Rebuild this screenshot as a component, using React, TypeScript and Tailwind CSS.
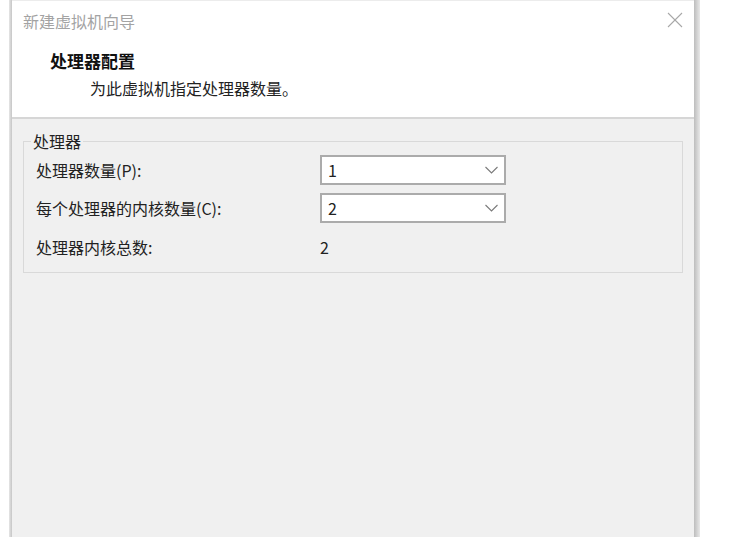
import React from "react";

const FONT = { fontFamily: '"Noto Sans CJK SC", "Microsoft YaHei", sans-serif' };

function Chevron() {
  return (
    <svg width="13" height="8" viewBox="0 0 13 8" fill="none">
      <polyline points="0.5,1 6.5,7 12.5,1" stroke="#7a7a7a" strokeWidth="1.1" />
    </svg>
  );
}

function Combo({ value }: { value: string }) {
  return (
    <div className="flex h-[30px] w-[186px] items-center justify-between border-2 border-[#ababab] bg-white pl-[6px] pr-[6px]">
      <span className="text-[16px] leading-[20px] text-[#222]">{value}</span>
      <Chevron />
    </div>
  );
}

export default function App() {
  return (
    <div className="h-[537px] w-[736px] overflow-hidden bg-white" style={FONT}>
      <div className="ml-[9px] flex h-full w-[692px]">
        <div className="w-[3px] shrink-0 bg-linear-to-r from-[#e6e6e6] to-[#c6c6c6]" />
        <div className="flex w-[682px] flex-col">
          <div className="h-[117px] shrink-0 border-t border-[#ececec] bg-white px-[11px] pt-[10px]">
            <div className="flex items-start justify-between">
              <span className="text-[16px] leading-[20px] text-[#a3a3a3]">新建虚拟机向导</span>
              <svg width="16" height="16" viewBox="0 0 16 16" className="mr-[0px] mt-[1px]">
                <line x1="1" y1="1" x2="15" y2="15" stroke="#a8a8a8" strokeWidth="1.1" />
                <line x1="15" y1="1" x2="1" y2="15" stroke="#a8a8a8" strokeWidth="1.1" />
              </svg>
            </div>
            <div className="mt-[19px] pl-[27px] text-[17px] font-bold leading-[22px] text-[#111]">处理器配置</div>
            <div className="mt-[5px] pl-[67px] text-[16px] leading-[22px] text-[#222]">为此虚拟机指定处理器数量。</div>
          </div>
          <div className="h-[2px] shrink-0 bg-[#d6d6d6]" />
          <div className="flex-1 bg-[#f0f0f0] px-[11px] pt-[12px]">
            <fieldset className="h-[142px] border border-[#d9d9d9] pl-[12px] pr-[12px]">
              <legend className="-ml-[5px] px-[2px] text-[16px] leading-[20px] text-[#222]">处理器</legend>
              <div className="grid grid-cols-[284px_auto] items-center pt-[4px] text-[16px] text-[#222]">
                <span className="leading-[20px]">处理器数量(P):</span>
                <Combo value="1" />
                <span className="mt-[8px] leading-[20px]">每个处理器的内核数量(C):</span>
                <div className="mt-[8px]">
                  <Combo value="2" />
                </div>
                <span className="mt-[13px] leading-[22px]">处理器内核总数:</span>
                <span className="mt-[13px] leading-[22px]">2</span>
              </div>
            </fieldset>
          </div>
        </div>
        <div className="w-[6px] shrink-0 bg-linear-to-r from-[#bdbdbd] to-[#e8e8e8]" />
      </div>
    </div>
  );
}
